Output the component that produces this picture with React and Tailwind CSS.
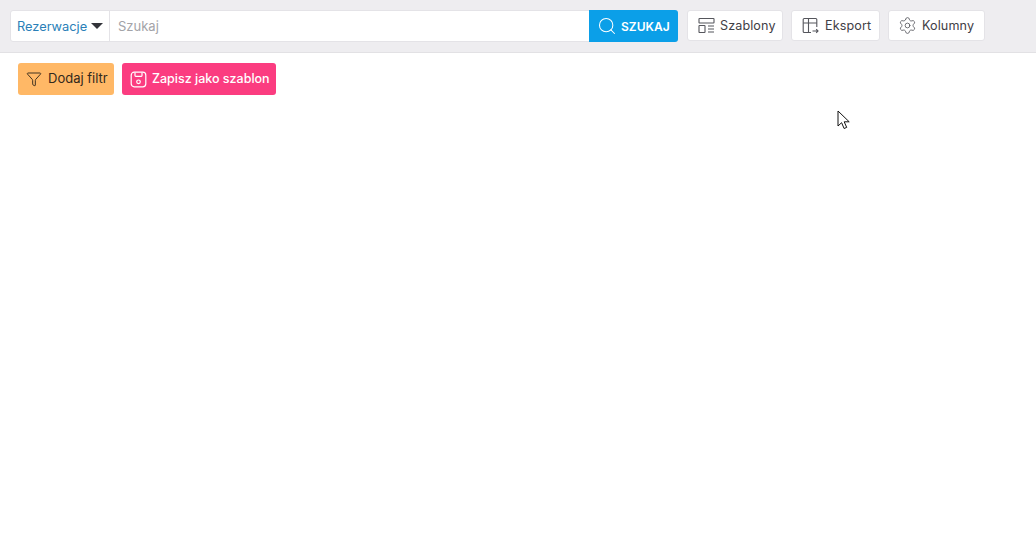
import { Funnel, Search, Settings } from 'lucide-react'

function TemplatesIcon() {
  return (
    <svg width="17" height="17" viewBox="0 0 17 17" fill="none" stroke="#55565c" strokeWidth="1.1">
      <rect x="1" y="1.5" width="15" height="4.5" rx="0.6" />
      <rect x="1" y="8.5" width="6" height="7" rx="0.6" />
      <path d="M10 9h6M10 12h6M10 15h6" />
    </svg>
  )
}

function ExportIcon() {
  return (
    <svg width="17" height="17" viewBox="0 0 17 17" fill="none" stroke="#55565c" strokeWidth="1.1">
      <path d="M9 15.5H2.2a1 1 0 0 1-1-1V2.5a1 1 0 0 1 1-1h11.6a1 1 0 0 1 1 1V10" />
      <path d="M1.2 6h13.6M6.5 1.5v14" />
      <path d="M10.5 14h5.5M14.2 12.2 16 14l-1.8 1.8" />
    </svg>
  )
}

function SaveIcon() {
  return (
    <svg width="17" height="17" viewBox="0 0 17 17" fill="none" stroke="#fff" strokeWidth="1.2">
      <rect x="1.2" y="1.2" width="14.6" height="14.6" rx="3" />
      <path d="M5 1.4v3.2a.8.8 0 0 0 .8.8h5.4a.8.8 0 0 0 .8-.8V1.4" />
      <circle cx="8.5" cy="10.8" r="1.8" />
    </svg>
  )
}

function ToolButton({ icon, label, className }) {
  return (
    <button className={`h-[31px] flex items-center bg-white border border-[#e4e3e7] rounded-[3px] text-[12.6px] tracking-[0.1px] text-[#3f4046] ${className}`}>
      {icon}
      <span className="pt-[1px]">{label}</span>
    </button>
  )
}

export default function App() {
  return (
    <div className="relative w-[1036px] h-[534px] overflow-hidden bg-white font-['Inter',sans-serif]">
      <div className="h-[53px] bg-[#eeedf0] border-b border-[#e2e1e4] pl-[10px] pt-[10px] flex items-start">
        <div className="w-[668px] h-[32px] flex bg-white border border-[#e4e3e7] rounded-[3px]">
          <div className="w-[99px] flex items-center pl-[6px] gap-[4px] border-r border-[#e4e3e7] text-[12.8px] text-[#2a7fb8]">
            <span className="pt-[2px]">Rezerwacje</span>
            <span className="w-0 h-0 border-x-[6px] border-x-transparent border-t-[6px] border-t-[#33343a]" />
          </div>
          <div className="flex-1 flex items-center pl-[8px] text-[13px] text-[#a3a3a8]">
            <span className="pt-[2px]">Szukaj</span>
          </div>
          <button className="w-[89px] -my-px -mr-px flex items-center pl-[8px] gap-[4px] bg-[#0b9fe8] rounded-r-[3px] text-[12px] font-semibold text-white">
            <Search size={20} strokeWidth={1.25} />
            <span className="pt-[2px]">SZUKAJ</span>
          </button>
        </div>
        <ToolButton className="ml-[9px] w-[96px] pl-[10px] gap-[5px]" icon={<TemplatesIcon />} label="Szablony" />
        <ToolButton className="ml-[8px] w-[89px] pl-[10px] gap-[6px]" icon={<ExportIcon />} label="Eksport" />
        <ToolButton className="ml-[8px] w-[97px] pl-[9px] gap-[5px]" icon={<Settings size={19} strokeWidth={1.05} color="#55565c" />} label="Kolumny" />
      </div>
      <div className="pl-[18px] pt-[10px] flex gap-[8px]">
        <button className="w-[96px] h-[32px] flex items-center pl-[8px] gap-[6px] bg-[#ffb866] rounded-[3px] text-[13px] text-[#33291c]">
          <Funnel size={16} strokeWidth={1.4} />
          Dodaj filtr
        </button>
        <button className="w-[154px] h-[32px] flex items-center pl-[8px] gap-[5px] bg-[#fb3c80] rounded-[3px] text-[12.5px] font-medium text-white">
          <SaveIcon />
          Zapisz jako szablon
        </button>
      </div>
      <svg className="absolute left-[837px] top-[110px]" width="14" height="20" viewBox="0 0 14 20">
        <path d="M1 1v15l3.6-3.3 2.5 5.8 2.6-1.1-2.5-5.6h5z" fill="#fff" stroke="#111" strokeWidth="1" />
      </svg>
    </div>
  )
}
